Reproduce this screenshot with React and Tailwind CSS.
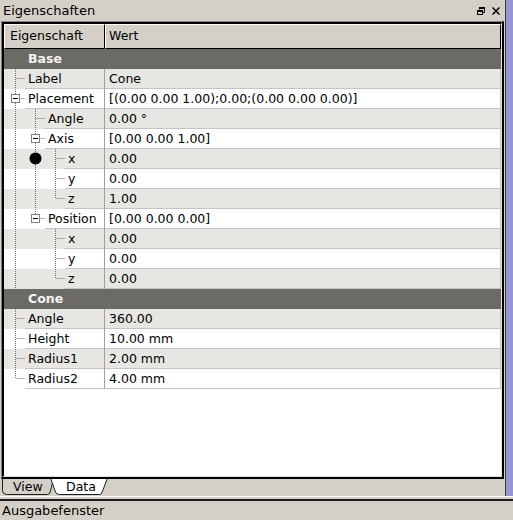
import React from 'react';

const rows = [
  { group: 'Base' },
  { name: 'Label', value: 'Cone', tree: ['tee'] },
  { name: 'Placement', value: '[(0.00 0.00 1.00);0.00;(0.00 0.00 0.00)]', tree: ['tee'], box: true },
  { name: 'Angle', value: '0.00 °', tree: ['pipe', 'tee'] },
  { name: 'Axis', value: '[0.00 0.00 1.00]', tree: ['pipe', 'tee'], box: true },
  { name: 'x', value: '0.00', tree: ['pipe', 'pipe', 'tee'], dot: true },
  { name: 'y', value: '0.00', tree: ['pipe', 'pipe', 'tee'] },
  { name: 'z', value: '1.00', tree: ['pipe', 'pipe', 'elbow'] },
  { name: 'Position', value: '[0.00 0.00 0.00]', tree: ['pipe', 'elbow'], box: true },
  { name: 'x', value: '0.00', tree: ['pipe', null, 'tee'] },
  { name: 'y', value: '0.00', tree: ['pipe', null, 'tee'] },
  { name: 'z', value: '0.00', tree: ['pipe', null, 'elbow'] },
  { group: 'Cone' },
  { name: 'Angle', value: '360.00', tree: ['tee'] },
  { name: 'Height', value: '10.00 mm', tree: ['tee'] },
  { name: 'Radius1', value: '2.00 mm', tree: ['tee'] },
  { name: 'Radius2', value: '4.00 mm', tree: ['elbow'] },
];

// dotted tree branches drawn the way Qt does it
function Branches({ tree, box, dot }) {
  const w = 21 + 20 * (tree.length - 1);
  const last = tree.length - 1;
  return (
    <svg width={w} height={20} className="block shrink-0">
      {tree.map((t, i) => {
        if (!t) return null;
        const x = 11.5 + 20 * i;
        return (
          <g key={i} stroke="#6f6f6f" strokeDasharray="1 1" fill="none">
            <line x1={x} y1={0} x2={x} y2={t === 'elbow' ? 10 : 20} />
            {i === last && <line x1={x + 1} y1={9.5} x2={w} y2={9.5} />}
          </g>
        );
      })}
      {box && (
        <g>
          <rect x={20 * last + 7.5} y={5.5} width={8} height={8} fill="#fff" stroke="#808080" />
          <line x1={20 * last + 9} y1={9.5} x2={20 * last + 14} y2={9.5} stroke="#000" />
        </g>
      )}
      {dot && <circle cx={31.5} cy={9.5} r={6} fill="#000" />}
    </svg>
  );
}

function Row({ row, index }) {
  if (row.group) {
    return (
      <div className="flex h-[20px] shrink-0 items-center bg-[#6c6a65] pl-[24px] pt-[1px] font-bold text-[#f4f4f4]">
        {row.group}
      </div>
    );
  }
  const bg = index % 2 ? 'bg-[#e8e6e2]' : 'bg-white';
  return (
    <div className={`flex h-[20px] shrink-0 ${bg}`}>
      <div className="flex w-[101px] shrink-0 border-r border-[#a0a0a0]">
        <Branches tree={row.tree} box={row.box} dot={row.dot} />
        <div className="flex flex-1 items-center overflow-hidden whitespace-nowrap border-b border-[#c4c4c4] pl-[3px] pt-[1px]">
          {row.name}
        </div>
      </div>
      <div className="flex flex-1 items-center whitespace-nowrap border-b border-r border-[#c4c4c4] pl-[4px] pt-[1px]">
        {row.value}
      </div>
    </div>
  );
}

function FloatIcon() {
  return (
    <svg width="8" height="8" viewBox="0 0 8 8" className="block">
      <path d="M2.5 2.5V0.5h5v5h-2" fill="none" stroke="#000" />
      <rect x="2" y="0" width="6" height="2" fill="#000" />
      <rect x="0.5" y="3.5" width="5" height="4" fill="none" stroke="#000" />
      <rect x="0" y="3" width="6" height="2" fill="#000" />
    </svg>
  );
}

function CloseIcon() {
  return (
    <svg width="8" height="8" viewBox="0 0 8 8" className="block">
      <path d="M0.5 0.5L7.5 7.5M7.5 0.5L0.5 7.5" stroke="#000" strokeWidth="1.5" />
    </svg>
  );
}

export default function App() {
  return (
    <div className="flex h-[520px] w-[513px] flex-col overflow-hidden bg-[#d4d0c8] font-['DejaVu_Sans',sans-serif] text-[12.5px] leading-none text-black">
      <div className="flex h-[496px] shrink-0">
        {/* dock panel */}
        <div className="flex w-[505px] shrink-0 flex-col">
          <div className="flex h-[21px] shrink-0 items-center justify-between pl-[3px] pr-[5px] text-[13px]">
            <span>Eigenschaften</span>
            <div className="flex items-center gap-[7px]">
              <FloatIcon />
              <CloseIcon />
            </div>
          </div>

          <div className="mx-[1px] flex h-[458px] shrink-0 flex-col border-b-2 border-l border-r-2 border-t border-b-black border-l-[#808080] border-r-black border-t-[#808080]">
            <div className="flex flex-1 flex-col border-b border-l-2 border-r border-t-2 border-b-[#e4e2de] border-l-black border-r-[#e4e2de] border-t-black bg-white">
              <div className="flex h-[25px] shrink-0 bg-[#d4d0c8]">
                <div className="flex w-[101px] shrink-0 items-center border-b border-l border-r border-t border-b-black border-l-white border-r-black border-t-white pl-[5px]">
                  Eigenschaft
                </div>
                <div className="flex flex-1 items-center border-b border-l border-r border-t border-b-black border-l-white border-r-black border-t-white pl-[3px]">
                  Wert
                </div>
              </div>
              {rows.map((r, i) => (
                <Row key={i} row={r} index={i} />
              ))}
              <div className="flex-1 bg-white" />
            </div>
          </div>

          {/* tab bar */}
          <div className="flex h-[17px] shrink-0 pl-[2px]">
            <div className="relative flex h-[16px] w-[52px] items-center pl-[11px] pt-[1px]">
              <svg width="52" height="16" className="absolute inset-0">
                <path d="M0.5 0V11.5Q0.5 15.5 4.5 15.5H45.5Q47.5 15.5 48.2 13L51.5 0" fill="#d4d0c8" stroke="#1e1e1e" />
              </svg>
              <span className="relative">View</span>
            </div>
            <div className="relative -ml-[4px] flex h-[16px] w-[58px] items-center pl-[16px] pt-[1px]">
              <svg width="58" height="16" className="absolute inset-0">
                <path d="M0.5 -1L5.5 13Q6.5 15.5 9.5 15.5H49.5Q51.5 15.5 52.2 13L57.5 -1Z" fill="#fff" stroke="none" />
                <path d="M0.5 -1L5.5 13Q6.5 15.5 9.5 15.5H49.5Q51.5 15.5 52.2 13L57.5 -1" fill="none" stroke="#1e1e1e" />
              </svg>
              <span className="relative">Data</span>
            </div>
          </div>
        </div>

        <div className="w-px shrink-0 bg-[#3c3c3c]" />
        <div className="flex-1 bg-[#9595d4]" />
      </div>

      <div className="h-px shrink-0 bg-white" />
      <div className="h-[2px] shrink-0" />
      <div className="h-[2px] shrink-0 bg-[#1e1e1e]" />
      <div className="flex flex-1 items-center pl-[2px] text-[13px]">Ausgabefenster</div>
    </div>
  );
}
